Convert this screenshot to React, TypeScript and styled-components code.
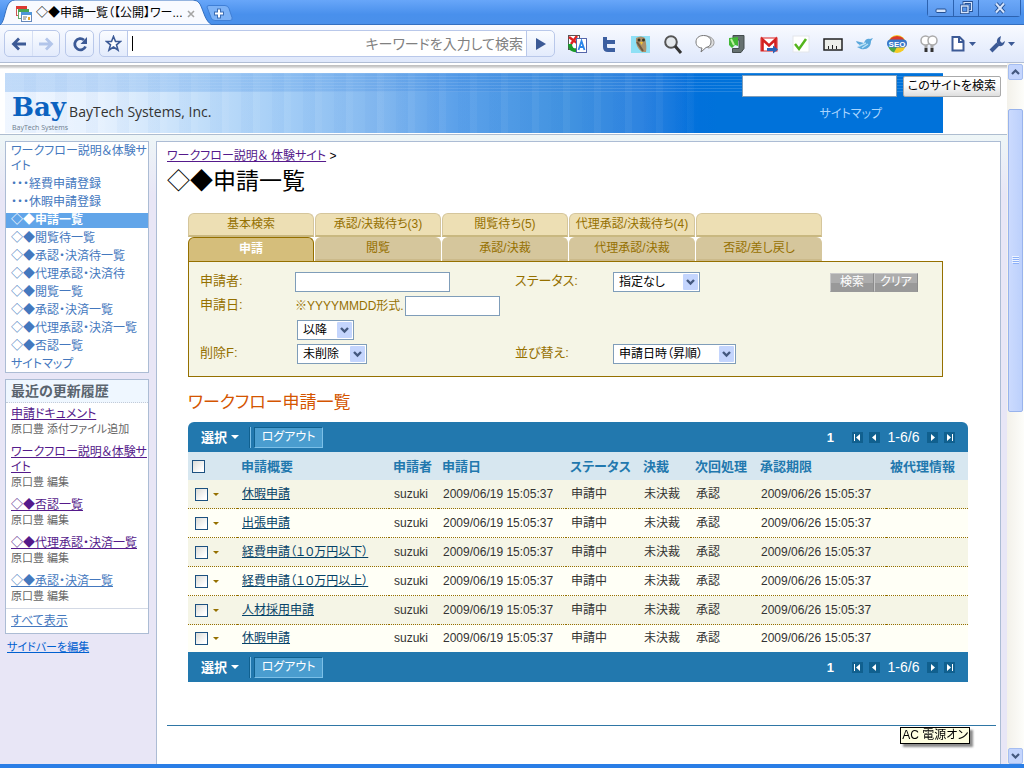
import React from "react";
import styled, { createGlobalStyle, css } from "styled-components";

const GlobalStyle = createGlobalStyle`
  * { box-sizing: border-box; }
  html, body { margin: 0; padding: 0; }
  body {
    font-family: "Liberation Sans", "Noto Sans CJK JP", sans-serif;
    font-size: 12px;
    line-height: 15px;
    font-feature-settings: "palt";
    color: #333;
  }
  button, input, select { font: inherit; font-feature-settings: inherit; margin: 0; }
  ul, h1, h2, p { margin: 0; padding: 0; list-style: none; font-weight: normal; }
`;

/* ---------- browser window ---------- */

const Window = styled.div`
  display: flex;
  flex-direction: column;
  min-height: 100vh;
  border-bottom: 4px solid #2a7ee6;
  background: #fff;
`;

const TitleBar = styled.div`
  display: flex;
  justify-content: space-between;
  height: 25px;
  background: linear-gradient(#68a6f9, #4990ec 60%, #4a90ea);
  border-bottom: 1px solid #336fc0;
`;

const TabStrip = styled.div`
  display: flex;
  align-items: flex-start;
`;

const BrowserTab = styled.div`
  position: relative;
  display: flex;
  align-items: center;
  gap: 4px;
  width: 206px;
  height: 25px;
  padding: 2px 11px 0 16px;
  color: #000;
`;

const TabShape = styled.svg`
  position: absolute;
  left: 0;
  top: 0;
`;

const TabIcon = styled.svg`
  position: relative;
  flex: none;
`;

const TabTitle = styled.span`
  position: relative;
  flex: 1;
  white-space: nowrap;
`;

const BareButton = styled.button`
  position: relative;
  display: flex;
  align-items: center;
  justify-content: center;
  padding: 0;
  border: 0;
  background: none;
`;

const NewTab = styled(BareButton)`
  margin-top: 5px;
`;

const WindowButtons = styled.div`
  display: flex;
  height: 17px;
  margin-right: 3px;
  border: 1px solid #2c62b0;
  border-top: 0;
  border-radius: 0 0 4px 4px;
`;

const WindowButton = styled(BareButton)<{ $wide?: boolean }>`
  width: ${(p) => (p.$wide ? 42 : 25)}px;
  & + & { border-left: 1px solid #2c62b0; }
  background: linear-gradient(#6ca8f8, #5796ec);
`;

const Toolbar = styled.div`
  display: flex;
  align-items: center;
  height: 38px;
  padding: 0 8px 0 4px;
  background: linear-gradient(#f8faff, #dfe8fb);
  border-bottom: 1px solid #b0bdd4;
`;

const ButtonGroup = styled.div`
  display: flex;
  height: 27px;
  margin-right: 5px;
  border: 1px solid #b9c8ea;
  border-radius: 5px;
  background: linear-gradient(#fafcff, #e3ebfc);
`;

const NavButton = styled(BareButton)`
  width: 27px;
  & + & { border-left: 1px solid #d5dff4; }
`;

const Omnibox = styled.div`
  display: flex;
  flex: 1;
  height: 27px;
  margin-right: 12px;
  border: 1px solid #b9c8ea;
  border-radius: 5px;
  background: linear-gradient(#fafcff, #e3ebfc);
`;

const AddressField = styled.label`
  display: flex;
  align-items: center;
  flex: 1;
  padding: 0 3px 0 4px;
  border: solid #b9c8ea;
  border-width: 0 1px;
  background: #fff;
  font-size: 14px;
`;

const Caret = styled.span`
  width: 1px;
  height: 15px;
  background: #000;
`;

const AddressInput = styled.input`
  flex: 1;
  min-width: 0;
  padding: 0;
  border: 0;
  outline: 0;
  background: none;
  text-align: right;
  line-height: 20px;
  &::placeholder { color: #808080; opacity: 1; }
`;

const Extensions = styled.div`
  display: flex;
  gap: 12px;
`;

const MenuButtons = styled.div`
  display: flex;
  gap: 13px;
  margin-left: 12px;
`;

const Viewport = styled.div`
  display: flex;
  flex: 1;
`;

const Page = styled.div`
  display: flex;
  flex-direction: column;
  flex: 1;
  min-width: 0;
  background: linear-gradient(#eef6f7, #e8e6f6 60px) 0 72px no-repeat #e8e6f6;
`;

const ScrollBar = styled.div`
  display: flex;
  flex-direction: column;
  width: 17px;
  padding: 1px 1px 0 1px;
  background: linear-gradient(90deg, #f3f1ea, #fdfdfa);
`;

const ScrollButton = styled(BareButton)`
  height: 16px;
  border: 1px solid #a5bdf0;
  border-radius: 2px;
  background: #c4d5fd;
`;

const ScrollGap = styled.div<{ $share: number }>`
  flex: ${(p) => p.$share};
`;

const ScrollThumb = styled.div`
  display: flex;
  flex: 302;
  align-items: center;
  justify-content: center;
  border: 1px solid #98b3ec;
  border-radius: 2px;
  background: linear-gradient(90deg, #cbdafe, #bcd0fc);
`;

/* ---------- site header ---------- */

const SiteHeader = styled.header`
  position: relative;
  height: 72px;
  padding: 10px 64px 0 5px;
  border-bottom: 1px solid #aebdd0;
  background: linear-gradient(#fff 2px, #bcbcbc 2px, #d0d0d0 4px, #fff 6px);
`;

const Banner = styled.div`
  display: flex;
  align-items: flex-end;
  gap: 1px;
  height: 60px;
  padding: 0 7px 0;
  background:
    linear-gradient(90deg, rgba(60, 140, 230, 0.26), rgba(30, 110, 210, 0.15) 60%, transparent 80%) 0 0 / 100% 19px no-repeat,
    repeating-linear-gradient(rgba(255, 255, 255, 0.14) 0 1px, transparent 1px 3px) 0 0 / 100% 19px no-repeat,
    linear-gradient(90deg, transparent 72%, #0072da 76%),
    repeating-linear-gradient(90deg, rgba(255, 255, 255, 0.04) 0 7px, transparent 7px 19px, rgba(0, 90, 210, 0.03) 19px 31px),
    linear-gradient(90deg, #eff6ff 0, #e6f1fe 10%, #c5e0fa 20%, #a3cdf6 30%, #83b8ef 40%, #5ca1ea 48%, #4293e0 60%, #2d83e0 68%, #0270dc 74%, #0072da);
`;

const Brand = styled.div`
  display: flex;
  flex-direction: column;
`;

const BrandMark = styled.span`
  color: #0b62c0;
  font-family: "DejaVu Serif", serif;
  font-size: 26px;
  font-weight: bold;
  line-height: 31px;
`;

const BrandSmall = styled.span`
  color: #6c7c8c;
  font-family: "Open Sans", sans-serif;
  font-size: 7px;
  line-height: 10px;
`;

const CompanyName = styled.span`
  color: #333;
  font-family: "Open Sans", sans-serif;
  font-size: 14px;
  line-height: 20px;
  padding-bottom: 11px;
`;

const SiteSearch = styled.form`
  position: absolute;
  top: 12px;
  right: 6px;
  display: flex;
  align-items: center;
  gap: 6px;
`;

const SearchBox = styled.input`
  width: 155px;
  height: 22px;
  border: 1px solid #7f9db9;
  background: #fff;
`;

const SearchButton = styled.button`
  height: 21px;
  width: 98px;
  padding: 0;
  border: 1px solid #aaa;
  border-radius: 2px;
  background: linear-gradient(#fff 40%, #dedede);
  color: #000;
  white-space: nowrap;
`;

const SitemapLink = styled.a`
  position: absolute;
  top: 44px;
  right: 125px;
  color: #a9d5ff;
  text-decoration: none;
`;

/* ---------- side column ---------- */

const Columns = styled.div`
  display: flex;
  flex: 1;
  gap: 7px;
  padding: 6px 6px 0 5px;
`;

const Sidebar = styled.nav`
  display: flex;
  flex-direction: column;
  gap: 6px;
  width: 144px;
`;

const SideBox = styled.section`
  border: 1px solid #acbcd4;
  background: #fff;
  overflow: hidden;
`;

const NavList = styled.ul`
  display: flex;
  flex-direction: column;
  gap: 3px;
  padding-top: 2px;
`;

const NavItem = styled.li<{ $active?: boolean }>`
  padding-left: 5px;
  color: #4478be;
  ${(p) => p.$active && css`
    background: #61a5e9;
    color: #fff;
    font-weight: bold;
  `}
`;

const PlainLink = styled.a`
  color: inherit;
  text-decoration: none;
`;

const SideHeading = styled.h2`
  padding: 4px 5px 3px;
  border-bottom: 1px dotted #c3cbd8;
  background: #eff7ff;
  color: #5a646e;
  font-size: 14px;
  font-weight: bold;
`;

const UpdateList = styled.ul`
  display: flex;
  flex-direction: column;
  gap: 9px;
  padding: 4px 0 5px 5px;
`;

const UpdateLink = styled.a<{ $fresh?: boolean }>`
  color: ${(p) => (p.$fresh ? "#4478be" : "#551a8b")};
`;

const UpdateNote = styled.p`
  color: #666;
  font-size: 11px;
  line-height: 14px;
`;

const ShowAll = styled.p`
  padding: 5px 5px 4px;
  border-top: 1px solid #d3d9e5;
  color: #4478be;
`;

const SmallLink = styled.a`
  padding-left: 2px;
  color: #0060d0;
  font-size: 11px;
`;

/* ---------- main column ---------- */

const Content = styled.main`
  flex: 1;
  min-width: 0;
  padding: 6px 4px 0 10px;
  border: 1px solid #acbcd4;
  border-bottom: 0;
  background: #fff;
`;

const Crumbs = styled.p`
  color: #000;
  line-height: 16px;
`;

const CrumbLink = styled.a`
  color: #551a8b;
`;

const PageTitle = styled.h1`
  margin: 2px 0 17px;
  color: #000;
  font-size: 23px;
  line-height: 30px;
`;

const Workflow = styled.div`
  margin: 0 28px 43px 21px;
`;

const TabGrid = styled.div`
  display: grid;
  grid-template-columns: repeat(5, 126px);
  column-gap: 1px;
`;

const SearchTab = styled.button<{ $tone: "upper" | "lower" | "active" }>`
  height: 24px;
  padding: 0;
  border: 1px solid #d5c69c;
  border-bottom: 2px solid #c9b880;
  border-radius: 6px 6px 0 0;
  background: #eddfb4;
  color: #957000;
  white-space: nowrap;
  ${(p) => p.$tone === "lower" && css`
    border-bottom-color: #cbb98a;
    background: #d5c69c;
  `}
  ${(p) => p.$tone === "active" && css`
    border-color: #957000;
    border-bottom: 0;
    background: #d5be7b;
    color: #fff;
    font-weight: bold;
  `}
`;

const SearchPanel = styled.form`
  display: grid;
  grid-template-columns: 95px 220px 96px 219px auto;
  grid-auto-rows: 24px;
  margin-right: 25px;
  padding: 8px 0 10px 11px;
  border: 1px solid #957000;
  background: #f5f5e6;
  color: #957000;
`;

const FieldLabel = styled.label<{ $column: number; $row: number }>`
  grid-column: ${(p) => p.$column};
  grid-row: ${(p) => p.$row};
  font-size: 13px;
  line-height: 21px;
`;

const Field = styled.div<{ $column: number; $row: number }>`
  grid-column: ${(p) => p.$column};
  grid-row: ${(p) => p.$row};
  display: flex;
  align-items: center;
  white-space: nowrap;
`;

const TextInput = styled.input<{ $width: number }>`
  width: ${(p) => p.$width}px;
  height: 20px;
  border: 1px solid #7f9db9;
  background: #fff;
`;

const FormatHint = styled.span`
  width: 110px;
  line-height: 15px;
`;

const SelectFrame = styled.span<{ $width: number }>`
  position: relative;
  width: ${(p) => p.$width}px;
  height: 20px;
  margin-left: 2px;
`;

const SelectBox = styled.select`
  appearance: none;
  width: 100%;
  height: 20px;
  padding: 0 0 0 5px;
  border: 1px solid #7f9db9;
  border-radius: 0;
  background: #fff;
  color: #000;
  line-height: 18px;
`;

const SelectArrow = styled.svg`
  position: absolute;
  top: 2px;
  right: 2px;
  pointer-events: none;
`;

const GrayButton = styled.button`
  width: 44px;
  height: 19px;
  padding: 0;
  border: 1px solid #c8c8c8;
  border-color: #c8c8c8 #8c8c8c #999 #c8c8c8;
  background: linear-gradient(#adadad 55%, #999 55%);
  color: #fff;
  line-height: 17px;
`;

const ListTitle = styled.h2`
  margin: 14px 0 8px;
  color: #d45500;
  font-size: 17px;
  line-height: 23px;
`;

const ListBar = styled.div<{ $top?: boolean }>`
  display: flex;
  align-items: center;
  height: 30px;
  padding: 0 13px;
  border-radius: ${(p) => (p.$top ? "6px 6px 0 0" : "0")};
  background: #2278ae;
  color: #fff;
`;

const ChooseButton = styled(BareButton)`
  gap: 4px;
  color: #fff;
  font-size: 13px;
  font-weight: bold;
`;

const BarDivider = styled.span`
  width: 2px;
  height: 21px;
  margin: 0 3px 0 10px;
  border-left: 1px solid #10608f;
  border-right: 1px solid #7cc0e8;
`;

const LogoutButton = styled.button`
  width: 69px;
  height: 21px;
  padding: 0;
  border: 1px solid #10608f;
  border-right-color: #7cc0e8;
  border-bottom-color: #7cc0e8;
  background: #4a9dcf;
  color: #fff;
`;

const Pager = styled.div`
  display: flex;
  align-items: center;
  gap: 6px;
  margin-left: auto;
`;

const PageNumber = styled.b`
  margin-right: 12px;
  font-size: 13px;
`;

const PagerButton = styled(BareButton)`
  width: 11px;
  height: 11px;
  background: #10608f;
`;

const PageRange = styled.span`
  min-width: 35px;
  font-size: 14px;
  text-align: center;
`;

const ListTable = styled.table`
  width: 100%;
  table-layout: fixed;
  border-collapse: separate;
  border-spacing: 0;
`;

const HeadCell = styled.th`
  height: 28px;
  padding: 0 0 0 4px;
  background: #d7e7f0;
  color: #2278ae;
  font-size: 13px;
  text-align: left;
  white-space: nowrap;
`;

const Cell = styled.td`
  height: 29px;
  padding: 0 0 0 5px;
  border-bottom: 1px dotted #957000;
  white-space: nowrap;
`;

const BodyRow = styled.tr`
  background: #fffff6;
  &:nth-child(odd) { background: #f5f5e6; }
  &:last-child ${Cell} {
    height: 27px;
    border-bottom: 0;
  }
`;

const RowLink = styled.a`
  color: #064368;
`;

const TickGroup = styled.span`
  display: flex;
  align-items: center;
  gap: 5px;
  padding-left: 2px;
`;

const Tick = styled.input.attrs({ type: "checkbox" })`
  appearance: none;
  display: block;
  width: 13px;
  height: 13px;
  border: 1px solid #1c5180;
  background: linear-gradient(135deg, #dcdcd7, #fff 80%);
`;

const PageRule = styled.hr`
  margin: 0;
  border: 0;
  border-top: 1px solid #2f76a5;
`;

const StatusTip = styled.div`
  position: fixed;
  right: 54px;
  bottom: 24px;
  height: 17px;
  padding: 0 1px;
  border: 1px solid #000;
  background: #ffffe1;
  box-shadow: 3px 3px 2px rgba(0, 0, 0, 0.45);
  color: #000;
  line-height: 15px;
`;

/* ---------- drawings ---------- */

const NAVY = "#3c5a96";

const Triangle = ({ color, width = 8 }: { color: string; width?: number }) => (
  <svg width={width} height={width / 2} viewBox="0 0 8 4"><path d="M0 0h8L4 4z" fill={color} /></svg>
);

const extensionIcons: { name: string; art: React.ReactNode }[] = [
  { name: "翻訳", art: <>
    <rect x="1.500" y="1.500" width="11" height="14" fill="#fff" stroke="#555" />
    <path d="M2 3l8 6M10 2L4 10" stroke="#d22" strokeWidth="2.500" />
    <path d="M3 10c0 5 3 7 8 6" stroke="#1a9a2a" strokeWidth="4" fill="none" />
    <rect x="9.500" y="4.500" width="10" height="14" fill="#fff" stroke="#56a" />
    <path d="M11.500 16l3-9 3 9M12.500 13h4" stroke="#2b86ea" strokeWidth="1.800" fill="none" />
  </> },
  { name: "Twitter", art: <path d="M6 3v10q0 3 3 3h7M6 8h10" stroke="#3c5fa0" strokeWidth="4" fill="none" /> },
  { name: "フクロウ", art: <>
    <rect x="0" y="2" width="19" height="17" fill="#8fe0f5" />
    <path d="M5 4q5-3 9 0 2 8 1 14h-4Q4 13 5 4z" fill="#ab916b" />
    <path d="M6 8l6 9" stroke="#6d5940" strokeWidth="2" />
    <circle cx="8" cy="6" r="1.500" fill="#332" /><circle cx="12.500" cy="6" r="1.500" fill="#332" />
    <path d="M9 8h3l-1.500 3z" fill="#f3c531" />
  </> },
  { name: "検索", art: <>
    <circle cx="8" cy="8" r="5.800" fill="#e4e8ec" stroke="#555" strokeWidth="2" />
    <path d="M12 12l6 7" stroke="#333" strokeWidth="3" />
  </> },
  { name: "コメント", art: <>
    <path d="M10 2c5 0 9 2.500 9 6.500S15 14 13 14z" fill="#ddd" stroke="#999" />
    <path d="M8.500 1.500C4 1.500 1 4 1 8s3 6 6 6l-1 4 5-4.500c3-.500 5-2.500 5-5.500 0-4-3-6.500-7.500-6.500z" fill="#fff" stroke="#777" />
  </> },
  { name: "保存", art: <>
    <path d="M6 1.500h11v13l-3 4H5.500v-4H12V6H6z" fill="#667170" stroke="#434c4d" />
    <path d="M2 4l9-1v9l-3-1-3 3-3-3z" fill="#42b835" />
    <path d="M4 5l3 6" stroke="#bff3a2" strokeWidth="2" />
  </> },
  { name: "Gmail", art: <>
    <rect x="2" y="4" width="16" height="13" fill="#fff" stroke="#d22" />
    <path d="M3.500 17V5.500l6.500 6 6.500-6V17" fill="none" stroke="#d3201f" strokeWidth="2.600" />
    <path d="M8 14h6v-2.500l5 4-5 4V17H8z" fill="#2a63b7" />
  </> },
  { name: "チェック", art: <>
    <rect x="2" y="2" width="16" height="16" fill="#fff" stroke="#e3e6ea" />
    <path d="M4 10l4 5 7-10" fill="none" stroke="#54b51d" strokeWidth="2.500" />
  </> },
  { name: "定規", art: <>
    <rect x="1" y="5" width="18" height="11" fill="#eceee9" stroke="#222" strokeWidth="1.500" />
    <path d="M5.500 15v-3M9.500 15v-4M13.500 15v-3" stroke="#222" />
  </> },
  { name: "小鳥", art: <>
    <path d="M1 7l8 2c1-4 4-5 6-4l3-1-2 3c0 6-4 9-10 8l-4-2 4-1-4-3z" fill="#5ba8dc" />
    <path d="M4 12l7-3M7 14l6-4" stroke="#b9e1f6" strokeWidth="1.500" />
  </> },
  { name: "SEO", art: <>
    <circle cx="10" cy="10" r="9" fill="#f5cb23" />
    <path d="M1.500 8a9 9 0 0117 0z" fill="#db3a28" />
    <path d="M1 10a9 9 0 006 8.500L10 13z" fill="#4da646" />
    <rect x="0" y="5.500" width="20" height="8" rx="4" fill="#3777c9" />
    <text x="10" y="12.500" textAnchor="middle" fontSize="8" fontWeight="bold" fill="#fff">SEO</text>
  </> },
  { name: "電球", art: <>
    <circle cx="6.500" cy="6.500" r="4.500" fill="#fff" stroke="#aaa" strokeWidth="1.500" />
    <circle cx="13.500" cy="6.500" r="4.500" fill="#fff" stroke="#aaa" strokeWidth="1.500" />
    <path d="M7 11v3M13 11v3" stroke="#aaa" strokeWidth="3" />
    <path d="M7 14v4M13 14v4" stroke="#333" strokeWidth="3" />
  </> },
];

const pagerPaths = {
  first: "M2 2h1v7H2zM8 2v7L4 5.500z",
  prev: "M7 2v7L3 5.500z",
  next: "M4 2v7l4-3.500z",
  last: "M3 2v7l4-3.500zM8 2h1v7H8z",
};

const PagerIcon = ({ kind }: { kind: keyof typeof pagerPaths }) => (
  <PagerButton aria-label={kind}>
    <svg width="11" height="11" viewBox="0 0 11 11"><path d={pagerPaths[kind]} fill="#fff" /></svg>
  </PagerButton>
);

/* ---------- data ---------- */

const navItems = [
  "ワークフロー説明＆体験サイト", "・・・経費申請登録", "・・・休暇申請登録", "◇◆申請一覧", "◇◆閲覧待一覧",
  "◇◆承認・決済待一覧", "◇◆代理承認・決済待", "◇◆閲覧一覧", "◇◆承認・決済一覧",
  "◇◆代理承認・決済一覧", "◇◆否認一覧", "サイトマップ",
];
const activeNav = 3;

const updates = [
  { title: "申請ドキュメント", note: "原口豊 添付ファイル追加" },
  { title: "ワークフロー説明＆体験サイト", note: "原口豊 編集" },
  { title: "◇◆否認一覧", note: "原口豊 編集" },
  { title: "◇◆代理承認・決済一覧", note: "原口豊 編集" },
  { title: "◇◆承認・決済一覧", note: "原口豊 編集", fresh: true },
];

const upperTabs = ["基本検索", "承認/決裁待ち(3)", "閲覧待ち(5)", "代理承認/決裁待ち(4)", ""];
const lowerTabs = ["申請", "閲覧", "承認/決裁", "代理承認/決裁", "否認/差し戻し"];

const columns: { label: string; width?: number }[] = [
  { label: "申請概要" },
  { label: "申請者", width: 49 },
  { label: "申請日", width: 128 },
  { label: "ステータス", width: 73 },
  { label: "決裁", width: 52 },
  { label: "次回処理", width: 65 },
  { label: "承認期限", width: 130 },
  { label: "被代理情報", width: 82 },
];

const requests = ["休暇申請", "出張申請", "経費申請（１０万円以下）", "経費申請（１０万円以上）", "人材採用申請", "休暇申請"];

/* ---------- parts ---------- */

const Dropdown = ({ id, label, width, value }: { id: string; label?: string; width: number; value: string }) => (
  <SelectFrame $width={width}>
    <SelectBox id={id} aria-label={label}><option>{value}</option></SelectBox>
    <SelectArrow width="15" height="16" viewBox="0 0 15 16">
      <rect width="15" height="16" rx="1" fill="#c4d5fd" />
      <path d="M4 6l3.500 3.500L11 6" fill="none" stroke="#44597f" strokeWidth="2.400" />
    </SelectArrow>
  </SelectFrame>
);

const ActionBar = ({ top }: { top?: boolean }) => (
  <ListBar $top={top}>
    <ChooseButton>選択<Triangle color="#fff" /></ChooseButton>
    <BarDivider />
    <LogoutButton>ログアウト</LogoutButton>
    <Pager>
      <PageNumber>1</PageNumber>
      <PagerIcon kind="first" />
      <PagerIcon kind="prev" />
      <PageRange>1-6/6</PageRange>
      <PagerIcon kind="next" />
      <PagerIcon kind="last" />
    </Pager>
  </ListBar>
);

const BrowserChrome = () => (
  <>
    <TitleBar>
      <TabStrip>
        <BrowserTab>
          <TabShape width="212" height="25" viewBox="0 0 212 25">
            <path d="M0 25C5 22 5 6 10 2q2-2 5-2h178q5 0 7 4c4 8 5 17 12 21z" fill="#f8faff" stroke="#336fc0" />
          </TabShape>
          <TabIcon width="16" height="16" viewBox="0 0 16 16">
            <rect x="0.500" y="0.500" width="10" height="9" fill="#fff" stroke="#c55" /><path d="M0 0h11v3H0z" fill="#dd3a33" />
            <rect x="2.500" y="3.500" width="10" height="9" fill="#fff" stroke="#6a6" /><path d="M2 3h11v3H2z" fill="#46a556" />
            <rect x="5.500" y="6.500" width="10" height="9" fill="#fff" stroke="#68b" /><path d="M5 6h11v3H5z" fill="#4f96d9" />
            <path d="M7 11h4M7 13h3" stroke="#777" /><path d="M12 11h2v3h-2z" fill="#e5a52c" />
          </TabIcon>
          <TabTitle>◇◆申請一覧（【公開】ワー...</TabTitle>
          <BareButton aria-label="タブを閉じる">
            <svg width="8" height="8" viewBox="0 0 8 8"><path d="M1 1l6 6M7 1L1 7" stroke="#a5a5a5" strokeWidth="1.600" /></svg>
          </BareButton>
        </BrowserTab>
        <NewTab aria-label="新しいタブ">
          <svg width="27" height="16" viewBox="0 0 27 16">
            <path d="M1 2q0-1.500 2-1.500h16q3 0 4 3l3 9q1 3-2 3H9q-3 0-4-3z" fill="#7db2f6" stroke="#3f7fd6" />
            <path d="M13 3.500v10M8 8.500h10" stroke="#3a6cb4" strokeWidth="4" />
            <path d="M13 4.500v8M9 8.500h8" stroke="#fff" strokeWidth="2" />
          </svg>
        </NewTab>
      </TabStrip>
      <WindowButtons>
        <WindowButton aria-label="最小化">
          <svg width="14" height="14" viewBox="0 0 14 14"><rect x="2" y="8" width="10" height="3.500" rx="1" fill="#d5e5fd" stroke="#234f92" /></svg>
        </WindowButton>
        <WindowButton aria-label="元に戻す">
          <svg width="14" height="14" viewBox="0 0 14 14">
            <path d="M5 4V1.500h7.500v8H10" fill="none" stroke="#234f92" strokeWidth="2.800" /><path d="M5 4V1.500h7.500v8H10" fill="none" stroke="#d5e5fd" strokeWidth="1.200" />
            <rect x="2.500" y="5" width="6.500" height="6.500" fill="#5796ec" stroke="#234f92" strokeWidth="3" /><rect x="2.500" y="5" width="6.500" height="6.500" fill="none" stroke="#d5e5fd" strokeWidth="1.400" />
          </svg>
        </WindowButton>
        <WindowButton $wide aria-label="閉じる">
          <svg width="14" height="14" viewBox="0 0 14 14">
            <path d="M3 2.500l8 9M11 2.500l-8 9" stroke="#234f92" strokeWidth="4" /><path d="M3 2.500l8 9M11 2.500l-8 9" stroke="#d5e5fd" strokeWidth="2" />
          </svg>
        </WindowButton>
      </WindowButtons>
    </TitleBar>
    <Toolbar>
      <ButtonGroup>
        <NavButton aria-label="戻る">
          <svg width="16" height="14" viewBox="0 0 16 14"><path d="M8 1.500L2.500 7 8 12.500M3 7h12" fill="none" stroke={NAVY} strokeWidth="2.800" /></svg>
        </NavButton>
        <NavButton aria-label="進む">
          <svg width="16" height="14" viewBox="0 0 16 14"><path d="M8 1.500L13.500 7 8 12.500M13 7H1" fill="none" stroke="#b2c5ea" strokeWidth="2.800" /></svg>
        </NavButton>
      </ButtonGroup>
      <ButtonGroup>
        <NavButton aria-label="再読み込み">
          <svg width="16" height="16" viewBox="0 0 16 16"><path d="M12 4a5.600 5.600 0 101.500 6.500" fill="none" stroke={NAVY} strokeWidth="2.800" /><path d="M15 1v7H8.500z" fill={NAVY} /></svg>
        </NavButton>
      </ButtonGroup>
      <Omnibox>
        <NavButton aria-label="ブックマーク">
          <svg width="17" height="17" viewBox="0 0 17 17"><path d="M8.500 1.500l2 5h5l-4 3.300 1.500 5.200-4.500-3-4.500 3 1.500-5.200-4-3.300h5z" fill="#fff" stroke={NAVY} strokeWidth="1.600" /></svg>
        </NavButton>
        <AddressField>
          <Caret />
          <AddressInput aria-label="アドレス" placeholder="キーワードを入力して検索" />
        </AddressField>
        <NavButton aria-label="移動">
          <svg width="10" height="12" viewBox="0 0 10 12"><path d="M0 0l10 6-10 6z" fill={NAVY} /></svg>
        </NavButton>
      </Omnibox>
      <Extensions>
        {extensionIcons.map((icon) => (
          <BareButton key={icon.name} aria-label={icon.name}>
            <svg width="20" height="20" viewBox="0 0 20 20">{icon.art}</svg>
          </BareButton>
        ))}
      </Extensions>
      <MenuButtons>
        <BareButton aria-label="ページメニュー">
          <svg width="25" height="18" viewBox="0 0 25 18">
            <path d="M1.500 2h7l4 4v9.500h-11z" fill="#fff" stroke={NAVY} strokeWidth="2" /><path d="M8 2v5h4.500" fill="none" stroke={NAVY} strokeWidth="2" />
            <path d="M18 7h7l-3.500 4z" fill={NAVY} />
          </svg>
        </BareButton>
        <BareButton aria-label="ツールメニュー">
          <svg width="27" height="18" viewBox="0 0 27 18">
            <path d="M2 16l7-7" stroke={NAVY} strokeWidth="4" /><path d="M12 1Q7 3 8 8l2 3q5 1 6-5l-3 2-2-2z" fill={NAVY} />
            <path d="M19 7h7l-3.500 4z" fill={NAVY} />
          </svg>
        </BareButton>
      </MenuButtons>
    </Toolbar>
  </>
);

const Scroller = () => (
  <ScrollBar>
    <ScrollButton aria-label="上へ"><svg width="9" height="6" viewBox="0 0 9 6"><path d="M1 5l3.500-3.500L8 5" fill="none" stroke="#44597f" strokeWidth="2.200" /></svg></ScrollButton>
    <ScrollGap $share={29} />
    <ScrollThumb>
      <svg width="7" height="8" viewBox="0 0 7 8"><path d="M0 .5h7M0 2.500h7M0 4.500h7M0 6.500h7" stroke="#eef4ff" /><path d="M1 1.500h6M1 3.500h6M1 5.500h6M1 7.500h6" stroke="#8cb0f8" /></svg>
    </ScrollThumb>
    <ScrollGap $share={337} />
    <ScrollButton aria-label="下へ"><svg width="9" height="6" viewBox="0 0 9 6"><path d="M1 1l3.500 3.500L8 1" fill="none" stroke="#44597f" strokeWidth="2.200" /></svg></ScrollButton>
  </ScrollBar>
);

const SideColumn = () => (
  <Sidebar>
    <SideBox>
      <NavList>
        {navItems.map((item, i) => (
          <NavItem key={item} $active={i === activeNav}><PlainLink href="#">{item}</PlainLink></NavItem>
        ))}
      </NavList>
    </SideBox>
    <SideBox>
      <SideHeading>最近の更新履歴</SideHeading>
      <UpdateList>
        {updates.map((u) => (
          <li key={u.title}>
            <UpdateLink href="#" $fresh={u.fresh}>{u.title}</UpdateLink>
            <UpdateNote>{u.note}</UpdateNote>
          </li>
        ))}
      </UpdateList>
      <ShowAll><UpdateLink href="#" $fresh>すべて表示</UpdateLink></ShowAll>
    </SideBox>
    <SmallLink href="#">サイドバーを編集</SmallLink>
  </Sidebar>
);

const SearchForm = () => (
  <>
    <TabGrid>
      {upperTabs.map((t, i) => <SearchTab key={i} $tone="upper">{t}</SearchTab>)}
      {lowerTabs.map((t, i) => <SearchTab key={t} $tone={i === 0 ? "active" : "lower"}>{t}</SearchTab>)}
    </TabGrid>
    <SearchPanel>
      <FieldLabel htmlFor="applicant" $column={1} $row={1}>申請者:</FieldLabel>
      <Field $column={2} $row={1}><TextInput id="applicant" $width={155} /></Field>
      <FieldLabel htmlFor="status" $column={3} $row={1}>ステータス:</FieldLabel>
      <Field $column={4} $row={1}><Dropdown id="status" width={87} value="指定なし" /></Field>
      <Field $column={5} $row={1}>
        <GrayButton type="button">検索</GrayButton>
        <GrayButton type="reset">クリア</GrayButton>
      </Field>
      <FieldLabel htmlFor="date" $column={1} $row={2}>申請日:</FieldLabel>
      <Field $column={2} $row={2}>
        <FormatHint>※YYYYMMDD形式.</FormatHint>
        <TextInput id="date" $width={95} />
      </Field>
      <Field $column={2} $row={3}><Dropdown id="range" label="期間" width={57} value="以降" /></Field>
      <FieldLabel htmlFor="deleted" $column={1} $row={4}>削除F:</FieldLabel>
      <Field $column={2} $row={4}><Dropdown id="deleted" width={70} value="未削除" /></Field>
      <FieldLabel htmlFor="order" $column={3} $row={4}>並び替え:</FieldLabel>
      <Field $column={4} $row={4}><Dropdown id="order" width={123} value="申請日時（昇順）" /></Field>
    </SearchPanel>
  </>
);

const RequestTable = () => (
  <ListTable>
    <colgroup>
      <col width={49} />
      {columns.map((c) => <col key={c.label} width={c.width} />)}
    </colgroup>
    <thead>
      <tr>
        <HeadCell><Tick aria-label="すべて選択" /></HeadCell>
        {columns.map((c) => <HeadCell key={c.label}>{c.label}</HeadCell>)}
      </tr>
    </thead>
    <tbody>
      {requests.map((name, i) => (
        <BodyRow key={i}>
          <Cell><TickGroup><Tick aria-label={name} /><Triangle color="#957000" width={6} /></TickGroup></Cell>
          <Cell><RowLink href="#">{name}</RowLink></Cell>
          <Cell>suzuki</Cell>
          <Cell>2009/06/19 15:05:37</Cell>
          <Cell>申請中</Cell>
          <Cell>未決裁</Cell>
          <Cell>承認</Cell>
          <Cell>2009/06/26 15:05:37</Cell>
          <Cell />
        </BodyRow>
      ))}
    </tbody>
  </ListTable>
);

export default function App() {
  return (
    <Window>
      <GlobalStyle />
      <BrowserChrome />
      <Viewport>
        <Page>
          <SiteHeader>
            <Banner>
              <Brand>
                <BrandMark>Bay</BrandMark>
                <BrandSmall>BayTech Systems</BrandSmall>
              </Brand>
              <CompanyName>BayTech Systems, Inc.</CompanyName>
            </Banner>
            <SiteSearch>
              <SearchBox aria-label="サイト内検索" />
              <SearchButton type="button">このサイトを検索</SearchButton>
            </SiteSearch>
            <SitemapLink href="#">サイトマップ</SitemapLink>
          </SiteHeader>
          <Columns>
            <SideColumn />
            <Content>
              <Crumbs><CrumbLink href="#">ワークフロー説明＆ 体験サイト</CrumbLink> &gt;</Crumbs>
              <PageTitle>◇◆申請一覧</PageTitle>
              <Workflow>
                <SearchForm />
                <ListTitle>ワークフロー申請一覧</ListTitle>
                <ActionBar top />
                <RequestTable />
                <ActionBar />
              </Workflow>
              <PageRule />
            </Content>
          </Columns>
        </Page>
        <Scroller />
      </Viewport>
      <StatusTip>AC 電源オン</StatusTip>
    </Window>
  );
}
